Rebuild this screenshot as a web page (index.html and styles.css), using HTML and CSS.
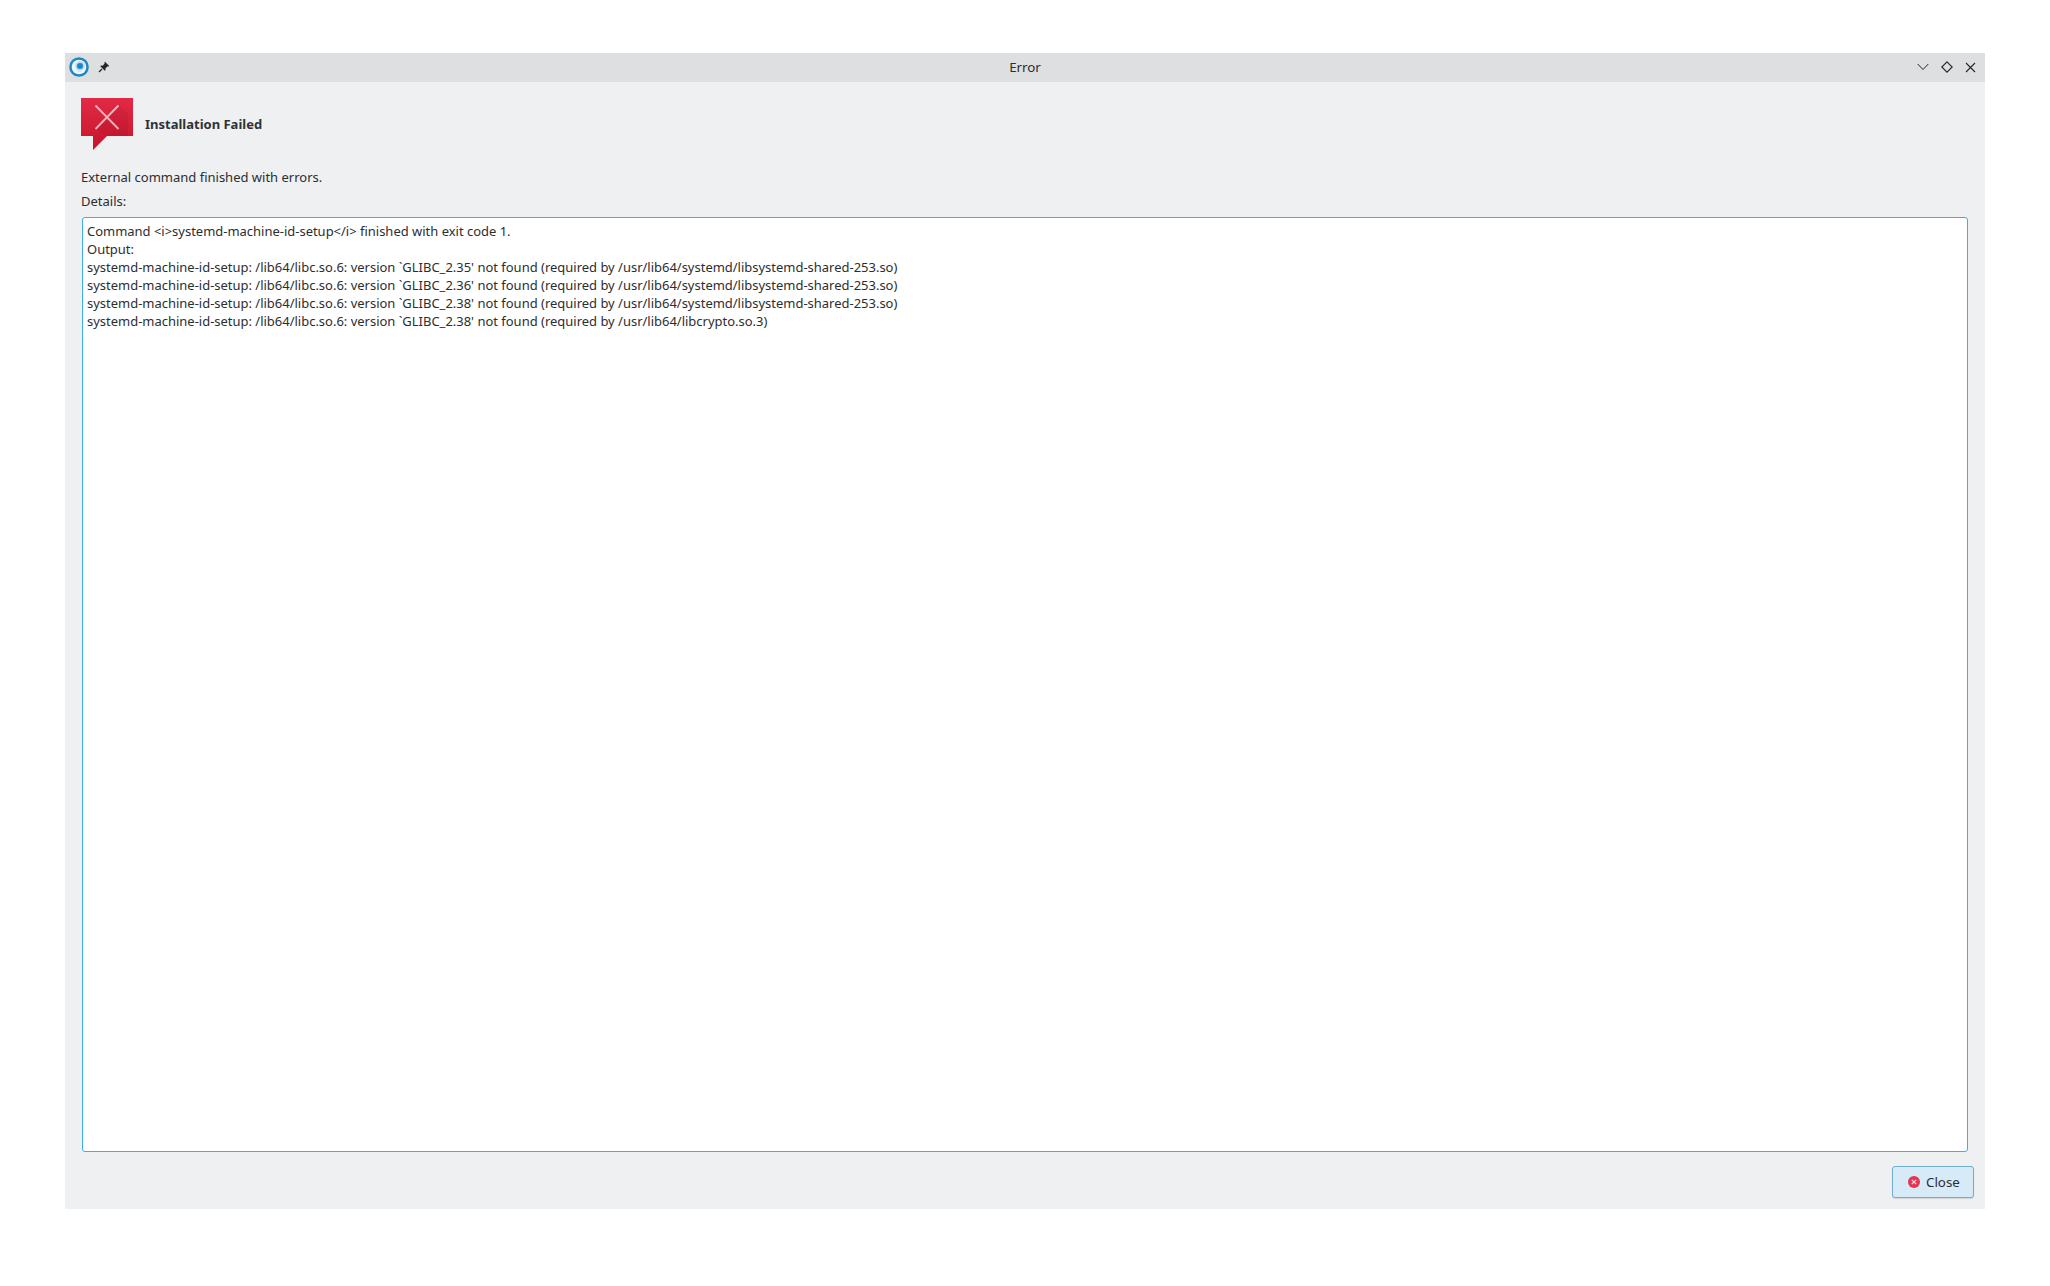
FILE: index.html
```html
<!DOCTYPE html>
<html lang="en">
<head>
<meta charset="utf-8">
<title>Error</title>
<link rel="stylesheet" href="styles.css">
</head>
<body>
<div class="window">
  <header class="titlebar">
    <div class="tb-left">
      <svg class="app-icon" width="20" height="20" viewBox="0 0 20 20">
        <circle cx="10" cy="10" r="9.800" fill="#1f87c6"/>
        <circle cx="10" cy="10" r="7.300" fill="#f0f6fa"/>
        <circle cx="11" cy="9" r="4.700" fill="#b5daef"/>
        <circle cx="11" cy="9" r="3" fill="#1f87c6"/>
        <path d="M6 12.200a6 6 0 0 0 9.300.2a6.500 6.500 0 0 1-9.300-.2z" fill="#6db5df"/>
      </svg>
      <svg class="pin-icon" width="12" height="12" viewBox="0 0 12 12">
        <path d="M7 .8 11.200 5 10.300 5.700 9.500 5.300 7.400 7.400 7.600 9 6.800 9.800 2.300 5.200 3 4.500 4.600 4.700 6.700 2.600 6.300 1.700z" fill="#232629"/>
        <path d="M4 8 1 11" stroke="#232629" stroke-width="1.200" fill="none"/>
      </svg>
    </div>
    <div class="tb-title">Error</div>
    <div class="tb-right">
      <svg width="12" height="8" viewBox="0 0 12 8"><path d="M.7 1 6 6.500 11.300 1" fill="none" stroke="#232629" stroke-width="1"/></svg>
      <svg width="12" height="12" viewBox="0 0 12 12"><path d="M6 .8 11.200 6 6 11.200 .8 6z" fill="none" stroke="#232629" stroke-width="1.100"/></svg>
      <svg width="11" height="11" viewBox="0 0 11 11"><path d="M1 1 10 10M10 1 1 10" fill="none" stroke="#232629" stroke-width="1.100"/></svg>
    </div>
  </header>
  <main class="content">
    <div class="heading-row">
      <svg class="error-icon" width="52" height="52" viewBox="0 0 52 52">
        <defs>
          <linearGradient id="redg" x1="0" y1="0" x2="0" y2="1">
            <stop offset="0" stop-color="#e32a46"/>
            <stop offset="1" stop-color="#c5142a"/>
          </linearGradient>
        </defs>
        <path d="M0 0H52V38H26L12 52V38H0z" fill="url(#redg)"/>
        <path d="M38 7 47 16V38H26L14 31z" fill="#000" opacity=".05"/>
        <path d="M14.500 7.500 37.500 31M37.500 7.500 14.500 31" stroke="#ffd9de" stroke-opacity=".8" stroke-width="1.800" fill="none"/>
      </svg>
      <strong class="heading">Installation Failed</strong>
    </div>
    <p class="message">External command finished with errors.</p>
    <p class="details-label">Details:</p>
    <div class="details">
      <div>Command &lt;i&gt;systemd-machine-id-setup&lt;/i&gt; finished with exit code 1.</div>
      <div>Output:</div>
      <div>systemd-machine-id-setup: /lib64/libc.so.6: version `GLIBC_2.35' not found (required by /usr/lib64/systemd/libsystemd-shared-253.so)</div>
      <div>systemd-machine-id-setup: /lib64/libc.so.6: version `GLIBC_2.36' not found (required by /usr/lib64/systemd/libsystemd-shared-253.so)</div>
      <div>systemd-machine-id-setup: /lib64/libc.so.6: version `GLIBC_2.38' not found (required by /usr/lib64/systemd/libsystemd-shared-253.so)</div>
      <div>systemd-machine-id-setup: /lib64/libc.so.6: version `GLIBC_2.38' not found (required by /usr/lib64/libcrypto.so.3)</div>
    </div>
    <div class="actions">
      <button class="close-btn" type="button">
        <svg width="12" height="12" viewBox="0 0 12 12">
          <circle cx="6" cy="6" r="6" fill="#e5354f"/>
          <path d="M3.800 3.800 8.200 8.200M8.200 3.800 3.800 8.200" stroke="#fff" stroke-opacity=".85" stroke-width="1.200" fill="none"/>
        </svg>
        <span>Close</span>
      </button>
    </div>
  </main>
</div>
</body>
</html>
```
FILE: styles.css
```css
* { box-sizing: border-box; }
html, body { margin: 0; padding: 0; background: #fff; }
body {
  padding: 53px 65px 77px;
  font-family: "Noto Sans", sans-serif;
  font-size: 13px;
  color: #2b2e31;
}
.window {
  width: 1920px;
  height: 1156px;
  background: #eff0f1;
  display: flex;
  flex-direction: column;
}
.titlebar {
  height: 29px;
  flex: none;
  background: #dedfe0;
  display: grid;
  grid-template-columns: 1fr auto 1fr;
  align-items: center;
}
.tb-left { display: flex; align-items: center; gap: 9px; padding-left: 4px; margin-top: -1px; }
.tb-left svg { display: block; }
.tb-title { font-size: 13.33px; line-height: 18px; margin-top: -2px; }
.tb-right {
  display: flex;
  align-items: center;
  justify-content: flex-end;
  gap: 12px;
  padding-right: 9px;
  margin-top: -1px;
}
.content {
  flex: 1;
  min-height: 0;
  display: flex;
  flex-direction: column;
  padding: 16px 11px 11px 16px;
}
.heading-row { display: flex; align-items: flex-start; gap: 12px; height: 52px; flex: none; }
.error-icon { display: block; flex: none; }
.heading { font-weight: 700; line-height: 18px; margin-top: 17px; color: #2f3235; }
.message { margin: 18px 0 0; line-height: 18px; }
.details-label { margin: 6px 0 0; line-height: 18px; }
.details {
  flex: 1;
  min-height: 0;
  margin: 7px 6px 0 1px;
  padding: 4px;
  background: #fff;
  border: 1px solid #3daee9;
  border-radius: 3px;
  font-size: 12.97px;
  line-height: 18px;
}
.actions { display: flex; justify-content: flex-end; margin-top: 14px; flex: none; }
.close-btn {
  width: 82px;
  height: 32px;
  display: flex;
  align-items: center;
  justify-content: flex-start;
  gap: 6px;
  padding: 0 0 0 15px;
  background: #d6eaf8;
  border: 1px solid #6fadd1;
  border-radius: 3px;
  box-shadow: 0 1px 1px rgba(0,0,0,.12);
  font-family: inherit;
  font-size: 13.33px;
  color: #2b2e31;
}
.close-btn svg { display: block; }
```
